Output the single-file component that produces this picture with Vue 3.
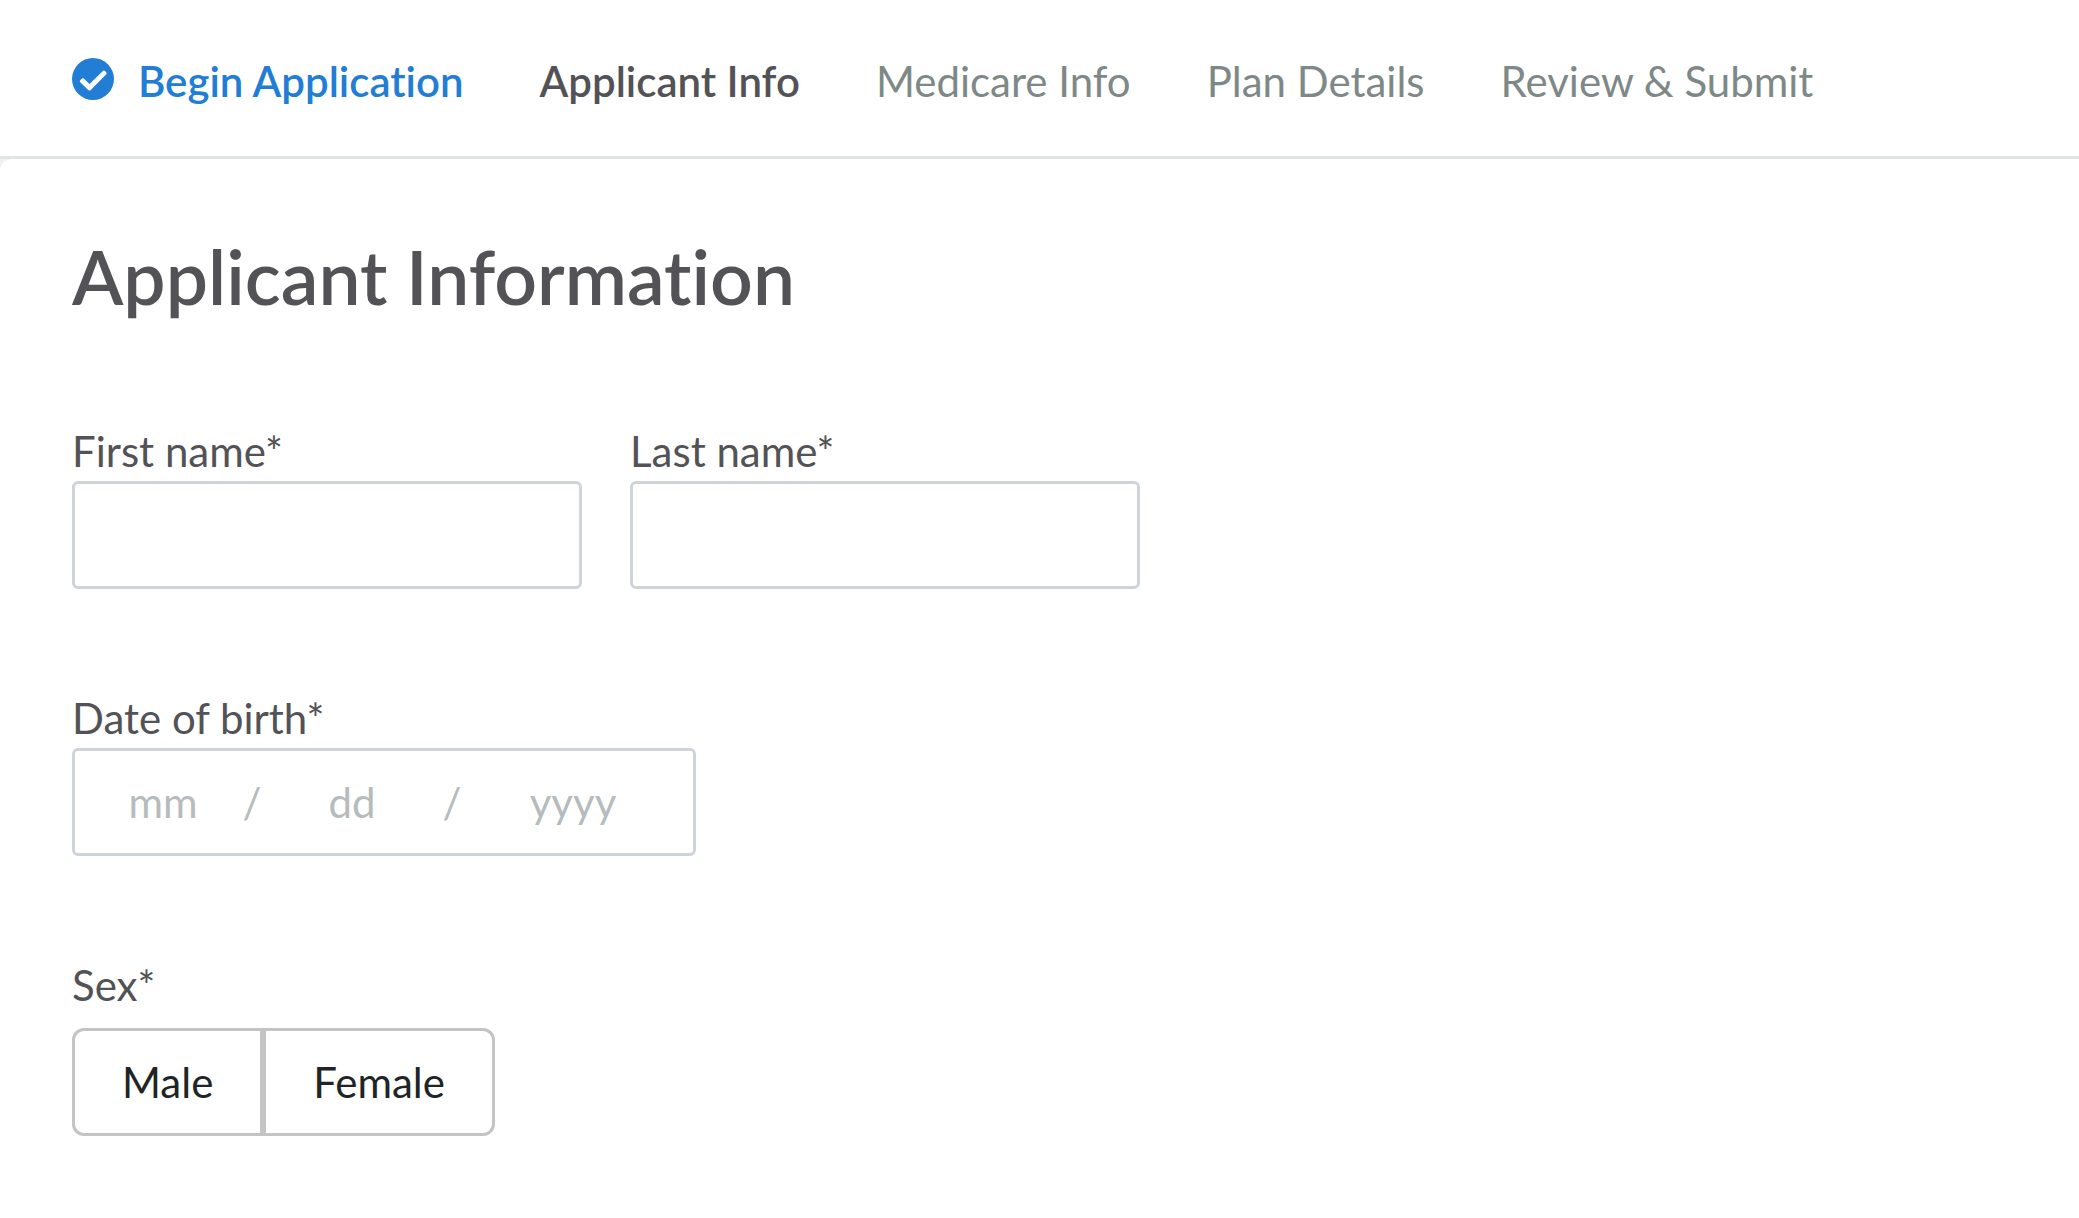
<script setup>
import { ref } from 'vue'

const steps = [
  { label: 'Begin Application', state: 'done' },
  { label: 'Applicant Info', state: 'current' },
  { label: 'Medicare Info', state: 'todo' },
  { label: 'Plan Details', state: 'todo' },
  { label: 'Review & Submit', state: 'todo' }
]

const sexOptions = ['Male', 'Female']
const firstName = ref('')
const lastName = ref('')
const month = ref('')
const day = ref('')
const year = ref('')
const sex = ref('')
</script>

<template>
  <div class="page">
    <nav class="steps" aria-label="Application progress">
      <ol class="step-list">
        <li v-for="step in steps" :key="step.label" class="step-item">
          <a
            href="#"
            class="step"
            :class="step.state"
            :aria-current="step.state === 'current' ? 'step' : null"
          >
            <svg v-if="step.state === 'done'" class="check" viewBox="0 0 42 42" aria-hidden="true">
              <circle cx="21" cy="21" r="21" fill="#217ed4" />
              <path d="M8.200 24.200 L11.800 20.600 L17.500 26 L31.200 12.800 Q32 12 33 12.900 L34.400 14.400 Q35 15.300 34.300 16.200 L18.500 32.200 Q17.500 33 16.500 32.200 L8.200 24.200 Q7.300 23.300 8.200 22.300 L10 20.500 Q10.900 19.800 11.800 20.600 Z" fill="#fff" />
            </svg>
            <span>{{ step.label }}</span>
          </a>
        </li>
      </ol>
    </nav>

    <main class="panel-wrap">
      <form class="panel" @submit.prevent>
        <h1>Applicant Information</h1>

        <div class="row">
          <div class="field">
            <label for="first-name">First name*</label>
            <input id="first-name" v-model="firstName" class="box" type="text" />
          </div>
          <div class="field">
            <label for="last-name">Last name*</label>
            <input id="last-name" v-model="lastName" class="box" type="text" />
          </div>
        </div>

        <div class="field">
          <label for="dob-month">Date of birth*</label>
          <div class="box date">
            <input id="dob-month" v-model="month" class="month" placeholder="mm" maxlength="2" aria-label="Month" />
            <span>/</span>
            <input v-model="day" class="day" placeholder="dd" maxlength="2" aria-label="Day" />
            <span>/</span>
            <input v-model="year" class="year" placeholder="yyyy" maxlength="4" aria-label="Year" />
          </div>
        </div>

        <div class="field sex" role="radiogroup" aria-labelledby="sex-label">
          <span id="sex-label">Sex*</span>
          <div class="segments">
            <label v-for="option in sexOptions" :key="option" class="segment">
              <input v-model="sex" type="radio" name="sex" :value="option" />
              <span>{{ option }}</span>
            </label>
          </div>
        </div>
      </form>
    </main>
  </div>
</template>

<style>
body {
  margin: 0;
  background: #fff;
}
</style>

<style scoped>
.page {
  min-height: 100vh;
  background: #fff;
  color: #535256;
  font-family: Lato, "Liberation Sans", sans-serif;
  font-size: 42px;
  line-height: 52px;
  font-variant-ligatures: none;
}

.steps {
  box-sizing: border-box;
  padding: 55px 72px 49px;
  border-bottom: 3px solid #e1e4e4;
}

.step-list {
  display: flex;
  gap: 76px;
  margin: 0;
  padding: 0;
  list-style: none;
}

.step {
  display: flex;
  gap: 24px;
  color: #7e8987;
  text-decoration: none;
  white-space: nowrap;
}

.step.done {
  color: #217ed4;
  font-weight: 600;
}

.step.current {
  color: #535256;
  font-weight: 600;
}

.check {
  width: 42px;
  height: 42px;
  margin-top: 3px;
}

.panel-wrap {
  background: #f0f0f3;
}

.panel {
  display: flex;
  flex-direction: column;
  gap: 103px;
  padding: 72px 72px 84px;
  border-top-left-radius: 12px;
  background: #fff;
}

h1 {
  margin: 0;
  font-size: 75px;
  line-height: 91px;
  font-weight: 600;
}

.row {
  display: flex;
  gap: 48px;
}

.field {
  display: flex;
  flex-direction: column;
  align-items: flex-start;
  gap: 4px;
}

.box {
  box-sizing: border-box;
  width: 510px;
  height: 108px;
  padding: 0 24px;
  border: 3px solid #ced4da;
  border-radius: 6px;
  background: #fff;
  color: inherit;
  font: inherit;
}

.date {
  display: flex;
  align-items: center;
  width: 624px;
  color: #b6bcbe;
}

.date input {
  box-sizing: border-box;
  min-width: 0;
  padding: 0;
  border: 0;
  background: none;
  color: #535256;
  font: inherit;
  text-align: center;
}

.date .month {
  width: 128px;
}

.date .day {
  flex: 1;
}

.date .year {
  width: 192px;
}

.date span {
  width: 50px;
  text-align: center;
}

.date input::placeholder {
  color: #b6bcbe;
  opacity: 1;
}

.sex {
  gap: 17px;
}

.segments {
  display: flex;
}

.segment {
  position: relative;
  box-sizing: border-box;
  height: 108px;
  padding: 25px 47px;
  border: 3px solid #c4c4c4;
  color: #202425;
}

.segment:first-child {
  border-radius: 12px 0 0 12px;
}

.segment:last-child {
  border-radius: 0 12px 12px 0;
}

.segment input {
  position: absolute;
  inset: 0;
  width: 100%;
  height: 100%;
  margin: 0;
  opacity: 0;
}

.segment:has(input:checked) {
  background: #e9f2fb;
}
</style>
